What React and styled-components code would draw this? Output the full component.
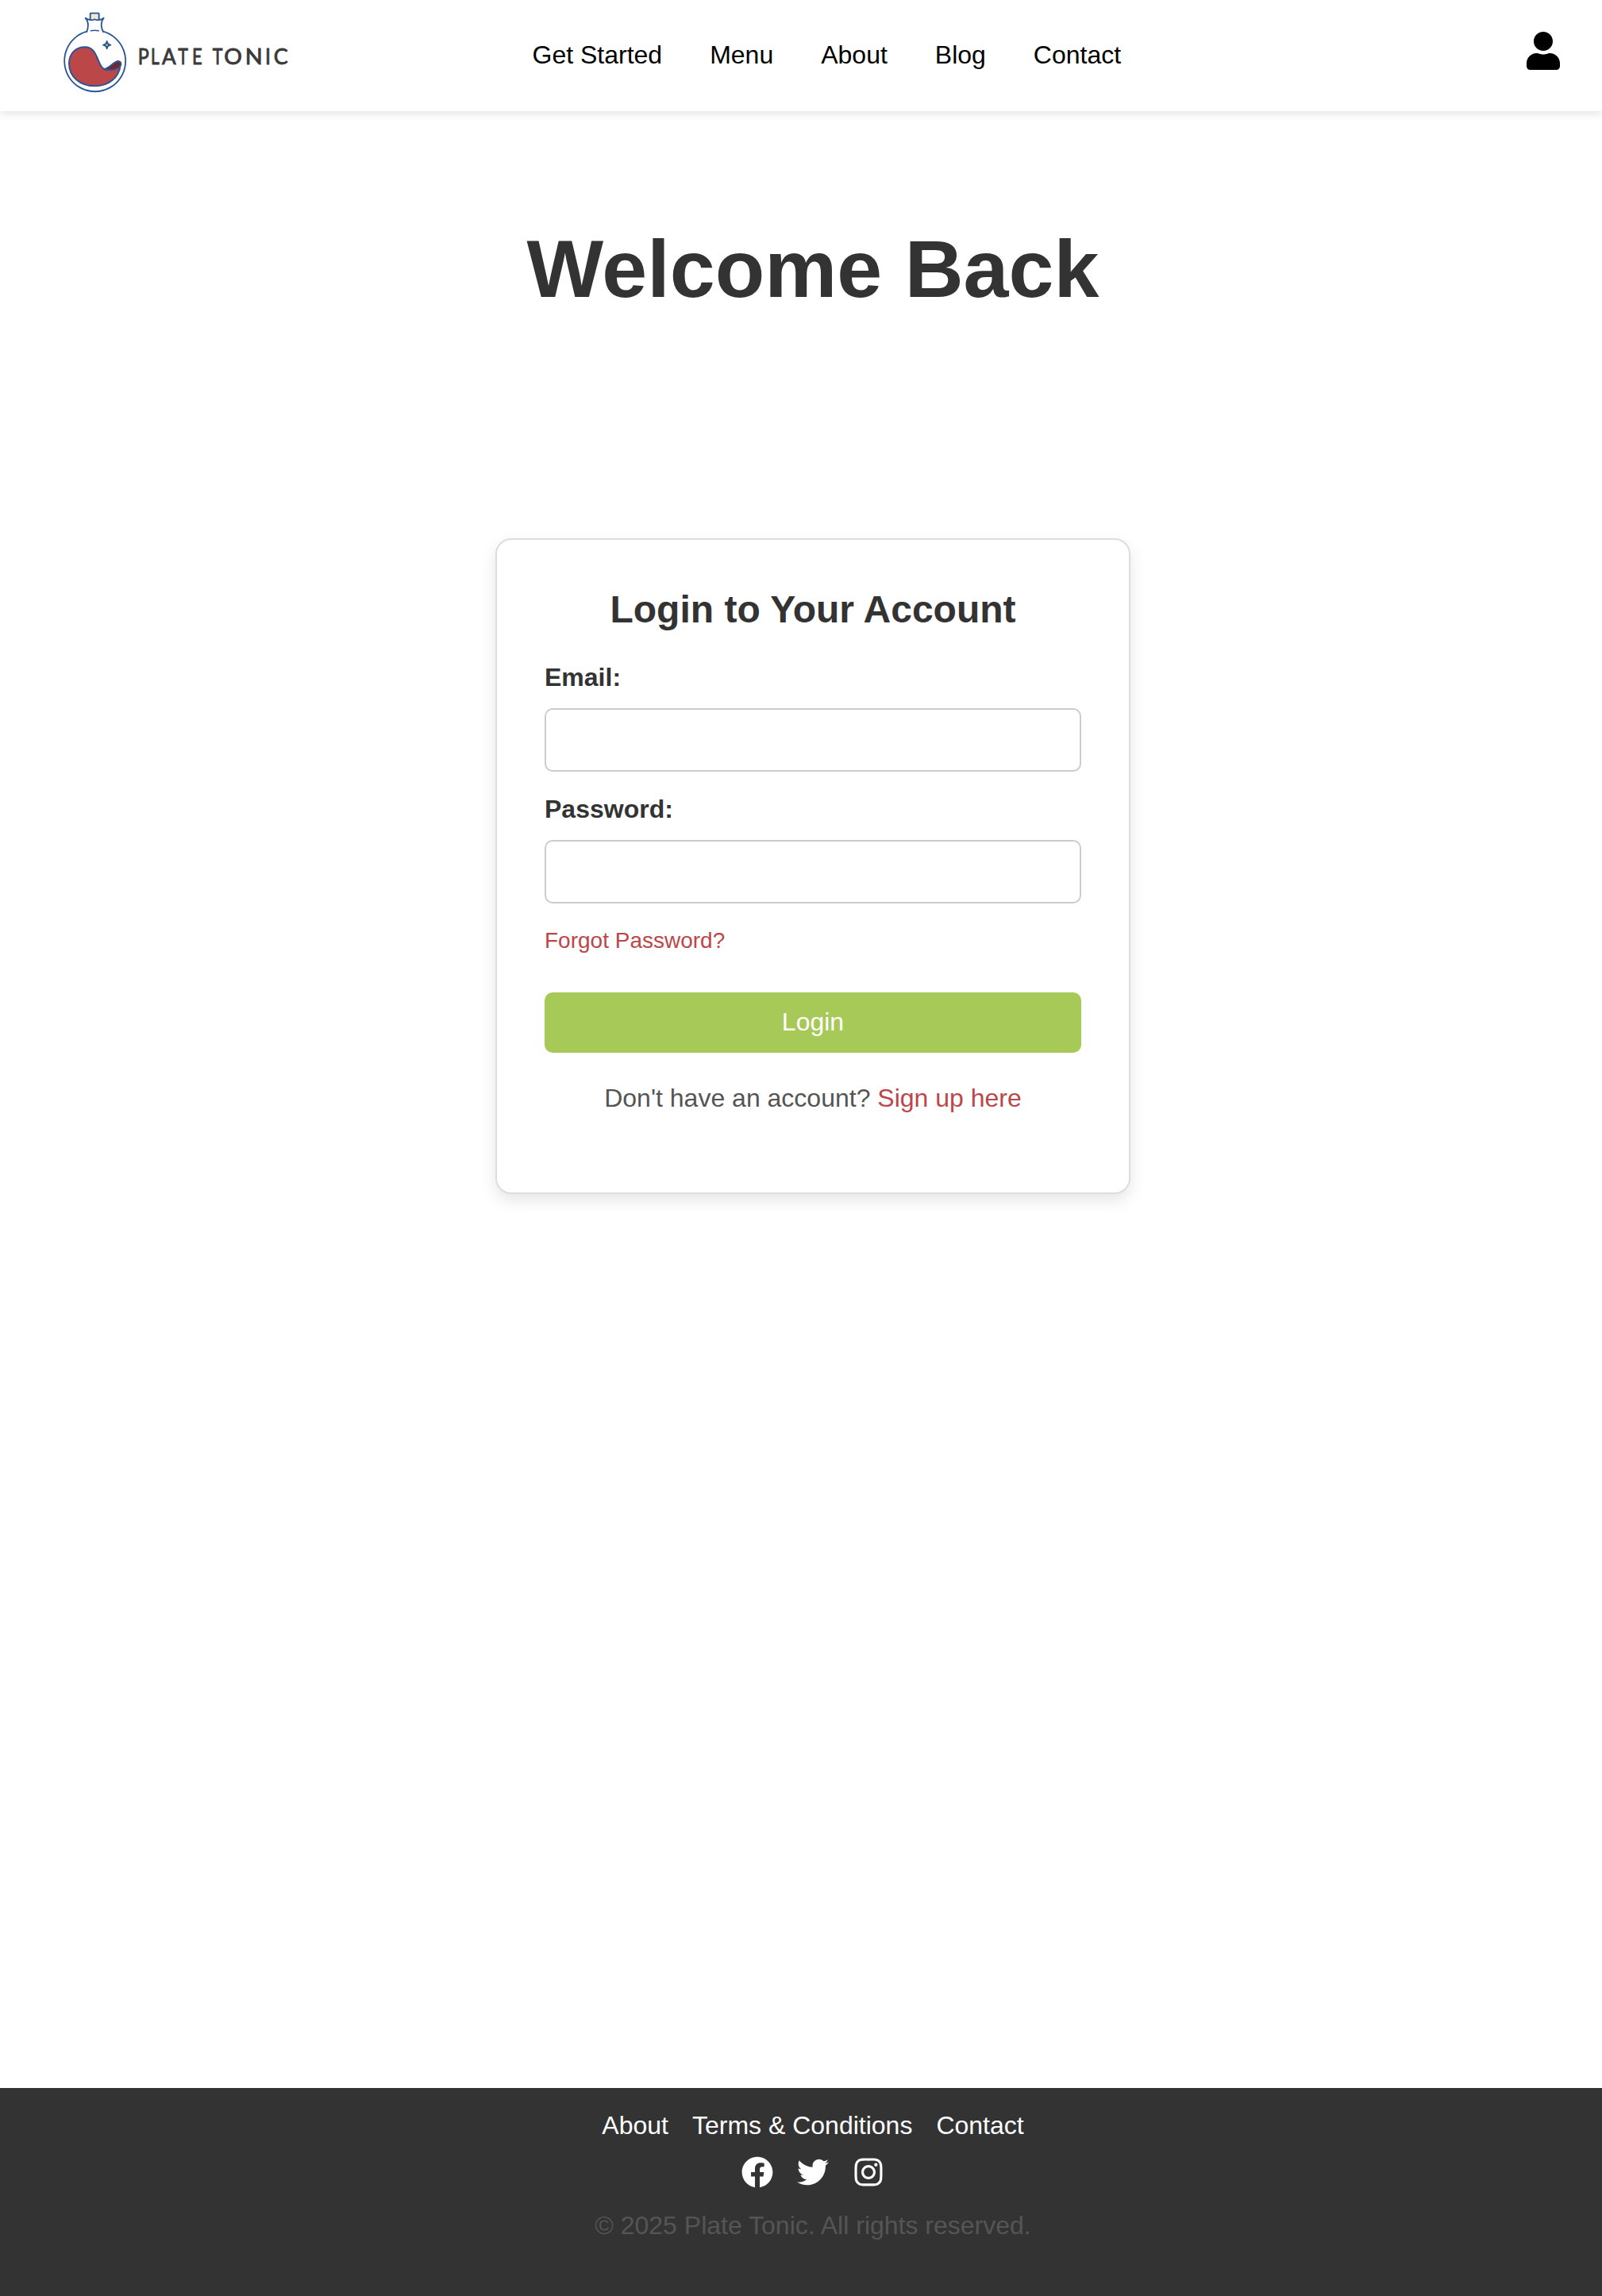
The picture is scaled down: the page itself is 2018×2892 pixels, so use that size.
import React from "react";
import styled, { createGlobalStyle } from "styled-components";
import { FaUser, FaFacebook, FaTwitter, FaInstagram } from "react-icons/fa";

const GlobalStyle = createGlobalStyle`
  *, *::before, *::after { box-sizing: border-box; }
  body {
    margin: 0;
    background: #fff;
    color: #333;
    font: 32px/36px "Liberation Sans", Arial, sans-serif;
  }
  h1, h2, p { margin: 0; }
  a { text-decoration: none; }
`;

const Page = styled.div`
  display: flex;
  flex-direction: column;
  min-height: 2892px;
`;

const Header = styled.header`
  display: grid;
  grid-template-columns: 610.5px 1fr 48px;
  height: 140px;
  padding: 0 50px 0 60px;
  background: #fff;
  box-shadow: 0 4px 10px rgba(0, 0, 0, 0.1);
`;

const LogoSvg = styled.svg`
  display: block;
  width: 320px;
  height: 140px;
`;

const LogoText = styled.text`
  font: 400 78px Lato, sans-serif;
  fill: #3a3a3a;
  stroke: #3a3a3a;
  stroke-width: 2.5px;
`;

const Nav = styled.nav`
  display: flex;
  gap: 60px;
  padding-top: 51px;
`;

const NavLink = styled.a`
  color: #000;
`;

const AccountLink = styled.a`
  display: block;
  height: 48px;
  margin-top: 40px;
  color: #000;
  font-size: 48px;
  line-height: 0;
`;

const Main = styled.main`
  display: flex;
  flex: 1;
  flex-direction: column;
  align-items: center;
  padding: 141px 0 0 30px;
`;

const PageTitle = styled.h1`
  margin-bottom: 282px;
  font-size: 102.4px;
  line-height: 115px;
`;

const Card = styled.form`
  display: flex;
  flex-direction: column;
  width: 800px;
  height: 826px;
  padding: 60px;
  border: 2px solid #ddd;
  border-radius: 20px;
  background: #fff;
  box-shadow: 0 8px 20px rgba(0, 0, 0, 0.1);
`;

const CardTitle = styled.h2`
  margin-bottom: 40px;
  font-size: 48px;
  line-height: 55px;
  text-align: center;
`;

const Field = styled.label`
  display: flex;
  flex-direction: column;
  gap: 21px;
  margin-bottom: 29px;
  font-weight: 700;
`;

const Input = styled.input`
  width: 100%;
  height: 80px;
  padding: 20px;
  border: 2px solid #ccc;
  border-radius: 10px;
  background: #fff;
  font: inherit;
  font-weight: 400;
`;

const ForgotLink = styled.a`
  margin: 2px 0 50px;
  color: #bc4749;
  font-size: 28px;
  line-height: 31px;
`;

const SubmitButton = styled.button`
  height: 76px;
  padding: 19px 20px 21px;
  border: 0;
  border-radius: 10px;
  background: #a7c957;
  color: #fff;
  font: inherit;
`;

const SignupText = styled.p`
  margin-top: 39px;
  color: #555;
  text-align: center;
`;

const SignupLink = styled.a`
  color: #bc4749;
`;

const Footer = styled.footer`
  display: flex;
  flex-direction: column;
  align-items: center;
  height: 262px;
  padding: 29px 0 0 30px;
  background: #333;
`;

const FooterRow = styled.div`
  display: flex;
  gap: 30px;
  margin-bottom: ${(p) => p.$after}px;
`;

const FooterLink = styled.a`
  color: #fff;
`;

const SocialLink = styled.a`
  height: 40px;
  color: #fff;
  font-size: 40px;
  line-height: 0;
`;

const Copyright = styled.p`
  color: #555;
`;

// Wordmark glyphs: [character, x, advance width]
const wordmark = [
  ["P", 341, 42],
  ["L", 390, 32],
  ["A", 432, 53],
  ["T", 493, 38],
  ["E", 546, 38],
  [" ", 590, 15],
  ["T", 623, 38],
  ["O", 667, 68],
  ["N", 746, 66],
  ["I", 822, 21],
  ["C", 854, 54],
];

function Logo() {
  return (
    <LogoSvg viewBox="0 0 960 420" role="img" aria-label="Plate Tonic">
      <g stroke="#2a5594" strokeWidth="5.5" strokeLinecap="round" strokeLinejoin="round" fill="none">
        <rect x="161" y="50" width="33" height="27" rx="2" fill="#f2e8cf" />
        <path
          d="M148 120 C153 106 154 88 149 77 L143 68 C149 73 155 75 162 75 C168 77 173 76 178 73 C183 76 188 77 194 75 C201 75 207 73 212 68 L206 77 C202 90 203 108 210 120"
          fill="#fff"
        />
        <path d="M163 116 Q178 114 193 116" strokeWidth="4.5" />
        <path d="M148 119 A115.500 115.500 0 1 0 210 119" />
        <path
          d="M81 240 C81 202 106 178 142 178 C192 178 187 252 214 261 C238 268 264 262 275 246 C270 295 229 325 180 325 C122 325 81 290 81 240Z"
          fill="#bc4749"
          strokeWidth="6"
        />
        <path
          d="M214 261 C237 256 248 234 266 231 C277 231 279 241 275 248 C266 262 236 268 214 261Z"
          fill="#76262b"
          strokeWidth="6"
        />
        <path
          d="M224 156 Q226 168 238 170 Q226 172 224 184 Q222 172 210 170 Q222 168 224 156Z"
          fill="#2a5594"
        />
        <circle cx="224" cy="170" r="4" fill="#a7c957" stroke="none" />
      </g>
      <LogoText y="244">
        {wordmark.map(([char, x, width]) => (
          <tspan key={x} x={x} textLength={width} lengthAdjust="spacingAndGlyphs">
            {char}
          </tspan>
        ))}
      </LogoText>
    </LogoSvg>
  );
}

const navItems = ["Get Started", "Menu", "About", "Blog", "Contact"];
const footerItems = ["About", "Terms & Conditions", "Contact"];
const socials = [
  ["Facebook", FaFacebook],
  ["Twitter", FaTwitter],
  ["Instagram", FaInstagram],
];

export default function App() {
  return (
    <Page>
      <GlobalStyle />
      <Header>
        <Logo />
        <Nav>
          {navItems.map((item) => (
            <NavLink key={item} href="#">{item}</NavLink>
          ))}
        </Nav>
        <AccountLink href="#" aria-label="Account">
          <FaUser />
        </AccountLink>
      </Header>
      <Main>
        <PageTitle>Welcome Back</PageTitle>
        <Card>
          <CardTitle>Login to Your Account</CardTitle>
          <Field>
            Email:
            <Input type="email" />
          </Field>
          <Field>
            Password:
            <Input type="password" />
          </Field>
          <ForgotLink href="#">Forgot Password?</ForgotLink>
          <SubmitButton type="button">Login</SubmitButton>
          <SignupText>
            Don't have an account? <SignupLink href="#">Sign up here</SignupLink>
          </SignupText>
        </Card>
      </Main>
      <Footer>
        <FooterRow $after={21}>
          {footerItems.map((item) => (
            <FooterLink key={item} href="#">{item}</FooterLink>
          ))}
        </FooterRow>
        <FooterRow $after={29}>
          {socials.map(([name, Icon]) => (
            <SocialLink key={name} href="#" aria-label={name}>
              <Icon />
            </SocialLink>
          ))}
        </FooterRow>
        <Copyright>© 2025 Plate Tonic. All rights reserved.</Copyright>
      </Footer>
    </Page>
  );
}
